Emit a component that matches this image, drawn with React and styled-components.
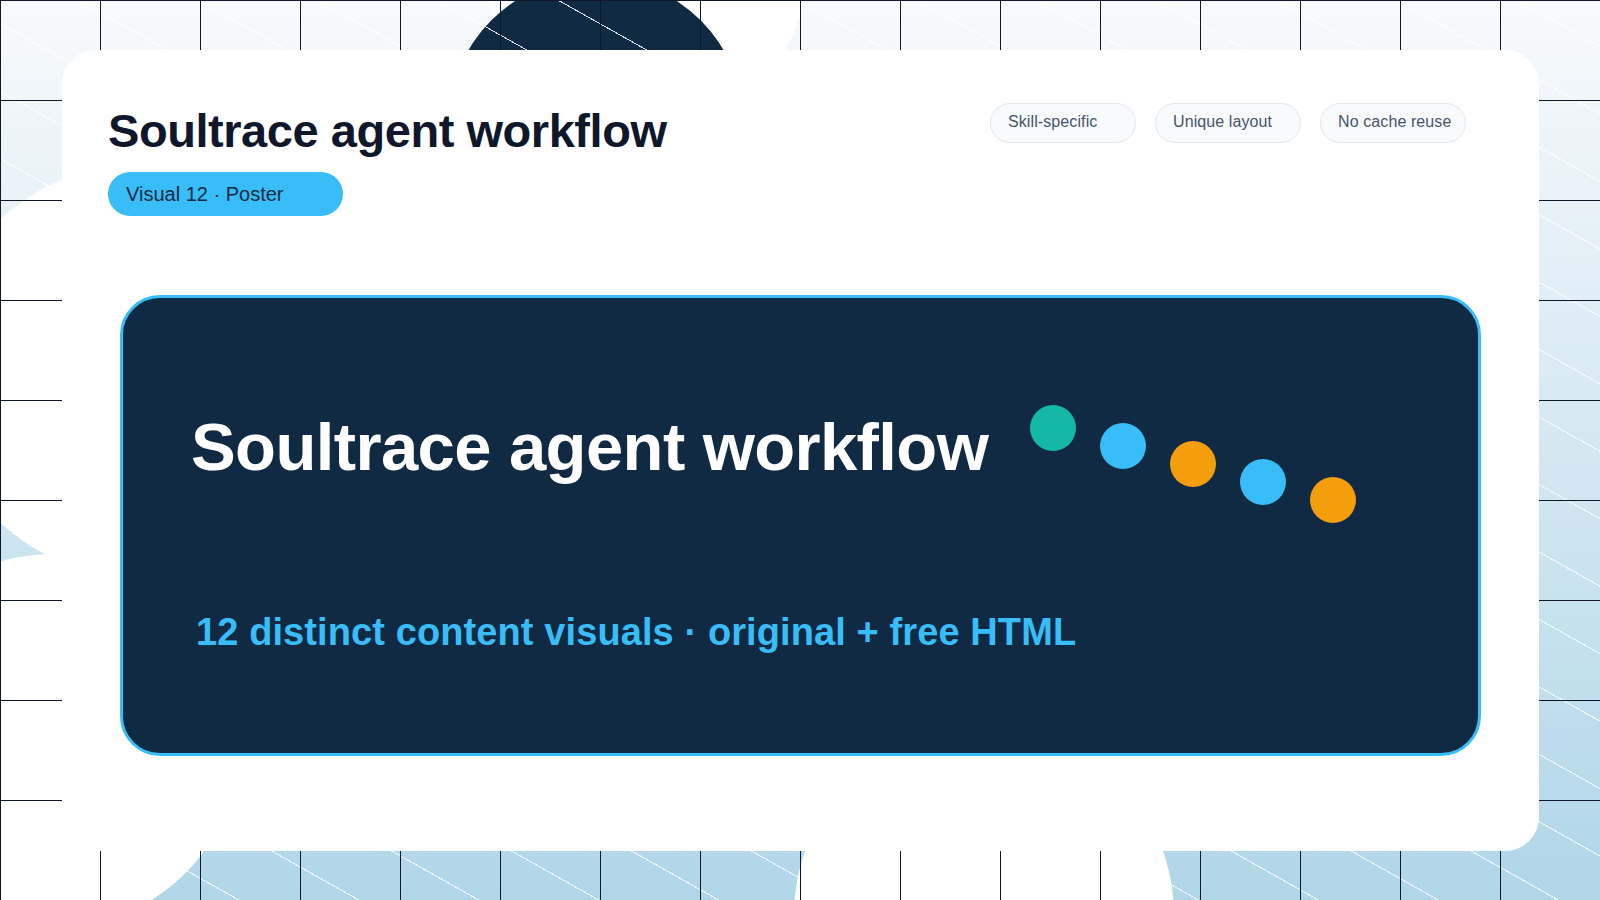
import React from 'react';
import styled, { createGlobalStyle } from 'styled-components';

const GlobalStyle = createGlobalStyle`
    html, body {
        margin: 0;
        padding: 0;
        background: #fff;
    }
    * {
        box-sizing: border-box;
    }
`;

const tags = ['Skill-specific', 'Unique layout', 'No cache reuse'];

const blobs = [
    { x: 141, y: 371, size: 414, color: '#ffffff' },
    { x: 53, y: 741, size: 374, color: '#ffffff' },
    { x: 984, y: 915, size: 380, color: '#ffffff' },
    { x: 646, y: -29, size: 320, color: '#ffffff' },
    { x: 596, y: 125, size: 296, color: '#102a43' },
];

const dots = [
    { color: '#14b8a6', drop: 0 },
    { color: '#38bdf8', drop: 18 },
    { color: '#f59e0b', drop: 36 },
    { color: '#38bdf8', drop: 54 },
    { color: '#f59e0b', drop: 72 },
];

export default function App() {
    return (
        <Stage>
            <GlobalStyle />
            {blobs.map((b, i) => (
                <Blob key={i} $x={b.x} $y={b.y} $size={b.size} $color={b.color} />
            ))}
            <Panel>
                <Header>
                    <TitleBlock>
                        <Title>Soultrace agent workflow</Title>
                        <Kicker>Visual 12 · Poster</Kicker>
                    </TitleBlock>
                    <TagList>
                        {tags.map((t) => (
                            <Tag key={t}>{t}</Tag>
                        ))}
                    </TagList>
                </Header>
                <Poster>
                    <PosterTop>
                        <PosterTitle>Soultrace agent workflow</PosterTitle>
                        <DotTrail>
                            {dots.map((d, i) => (
                                <Dot key={i} $color={d.color} $drop={d.drop} />
                            ))}
                        </DotTrail>
                    </PosterTop>
                    <PosterSub>12 distinct content visuals · original + free HTML</PosterSub>
                </Poster>
            </Panel>
        </Stage>
    );
}

const Stage = styled.div`
    position: relative;
    display: flex;
    width: 1600px;
    height: 900px;
    padding: 50px 61px 49px 62px;
    overflow: hidden;
    font-family: 'Liberation Sans', Arial, sans-serif;
    background: linear-gradient(180deg, #f8fafc 0%, #b0d6e8 100%);

    &::after {
        content: '';
        position: absolute;
        inset: 0;
        background-image:
            linear-gradient(#0f172a 1px, transparent 1px),
            linear-gradient(90deg, #0f172a 1px, transparent 1px),
            repeating-linear-gradient(to top right, transparent 0 57.8px, rgba(255, 255, 255, 0.85) 57.8px 58.8px);
        background-size: 100px 100px, 100px 100px, auto;
    }
`;

const Blob = styled.div`
    position: absolute;
    left: ${(p) => p.$x - p.$size / 2}px;
    top: ${(p) => p.$y - p.$size / 2}px;
    width: ${(p) => p.$size}px;
    height: ${(p) => p.$size}px;
    border-radius: 50%;
    background: ${(p) => p.$color};
`;

const Panel = styled.main`
    position: relative;
    z-index: 1;
    flex: 1;
    padding: 53px 58px 0;
    border-radius: 34px;
    background: #fff;
`;

const Header = styled.header`
    display: flex;
    justify-content: space-between;
    align-items: flex-start;
    height: 192px;
    padding-right: 15px;
`;

const TitleBlock = styled.div`
    display: flex;
    flex-direction: column;
    align-items: flex-start;
    gap: 15px;
    margin: 1px 0 0 -12px;
`;

const Title = styled.h1`
    margin: 0;
    font-size: 47px;
    line-height: 53px;
    letter-spacing: -0.45px;
    font-weight: 700;
    color: #0f172a;
`;

const Kicker = styled.div`
    width: 235px;
    height: 44px;
    padding: 0 18px;
    border-radius: 22px;
    font-size: 20px;
    line-height: 44px;
    color: #102a43;
    background: #38bdf8;
`;

const TagList = styled.div`
    display: flex;
    gap: 19px;
`;

const Tag = styled.div`
    width: 146px;
    height: 40px;
    padding: 8px 0 0 17px;
    border: 1px solid #e2e8f0;
    border-radius: 20px;
    font-size: 16px;
    line-height: 19px;
    letter-spacing: 0.1px;
    color: #475569;
    background: #f8fafc;
`;

const Poster = styled.section`
    display: flex;
    flex-direction: column;
    height: 461px;
    padding: 111px 0 0 68px;
    border: 3px solid #38bdf8;
    border-radius: 40px;
    background: #102a43;
`;

const PosterTop = styled.div`
    display: flex;
    align-items: flex-start;
`;

const PosterTitle = styled.h2`
    width: 839px;
    margin: 0;
    font-size: 67px;
    line-height: 76px;
    letter-spacing: -0.6px;
    font-weight: 700;
    color: #fff;
`;

const DotTrail = styled.div`
    display: flex;
    gap: 24px;
    margin-top: -4px;
`;

const Dot = styled.span`
    width: 46px;
    height: 46px;
    margin-top: ${(p) => p.$drop}px;
    border-radius: 50%;
    background: ${(p) => p.$color};
`;

const PosterSub = styled.p`
    margin: 89px 0 0 5px;
    font-size: 38px;
    line-height: 41px;
    letter-spacing: 0.1px;
    font-weight: 700;
    color: #38bdf8;
`;
